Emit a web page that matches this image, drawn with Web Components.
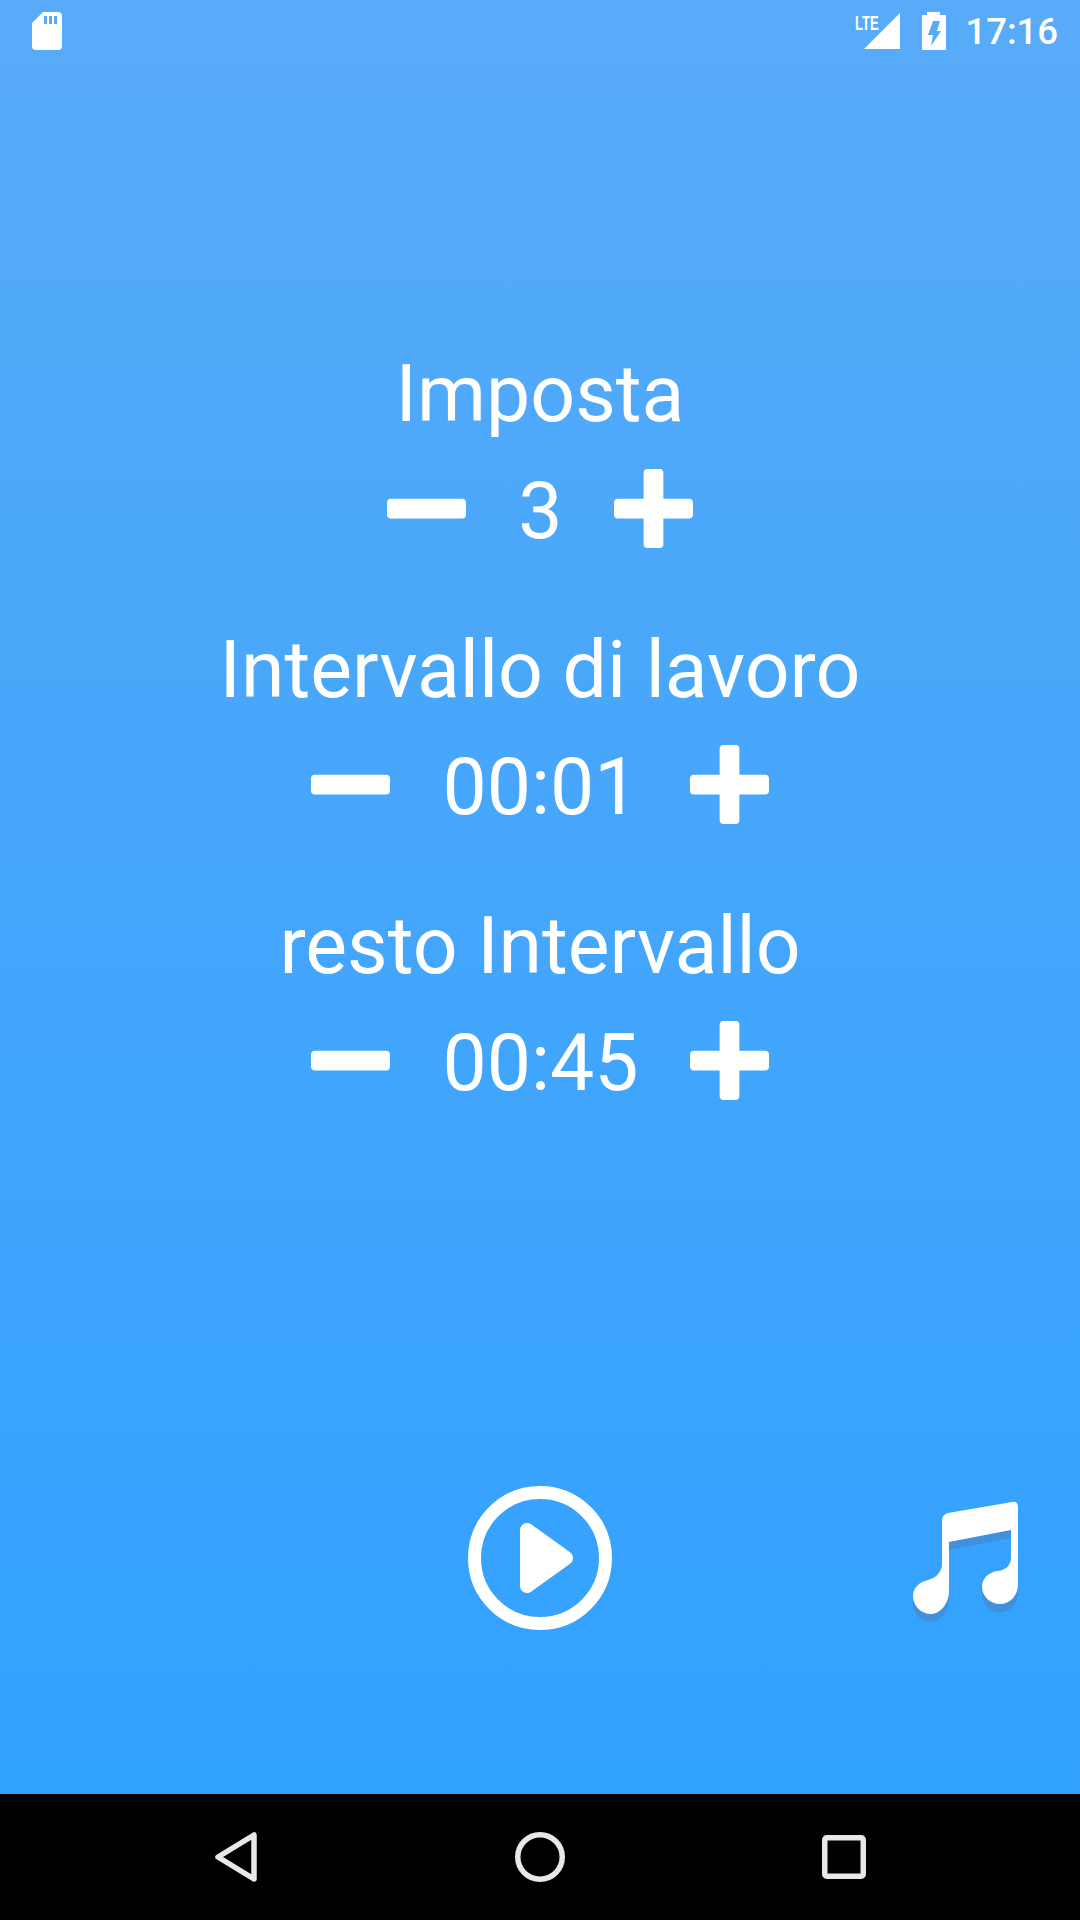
<!DOCTYPE html>
<html>
<head>
<meta charset="utf-8">
<style>
    html, body { margin: 0; padding: 0; }
    body { font-family: Roboto, "Liberation Sans", sans-serif; color: #fff; }
</style>
</head>
<body>
<timer-app>
    <status-bar slot="top" time="17:16"></status-bar>
    <set-stepper><span slot="label">Imposta</span>3</set-stepper>
    <set-stepper><span slot="label">Intervallo di lavoro</span>00:01</set-stepper>
    <set-stepper><span slot="label">resto Intervallo</span>00:45</set-stepper>
    <action-bar slot="actions"></action-bar>
    <nav-bar slot="bottom"></nav-bar>
</timer-app>

<script>
class timerApp extends HTMLElement {
    constructor() {
        super();
        this.attachShadow({ mode: 'open' });
        this.shadowRoot.innerHTML = `
            <slot name="top"></slot>
            <main><slot></slot></main>
            <slot name="actions"></slot>
            <slot name="bottom"></slot>
            <style>
                :host {
                    display: flex;
                    flex-direction: column;
                    width: 1080px;
                    height: 1920px;
                    overflow: hidden;
                    background: linear-gradient(#58abf8, #31a1ff 1794px, #31a1ff);
                }
                main {
                    flex: 1;
                    display: flex;
                    flex-direction: column;
                    gap: 75px;
                    padding-top: 275px;
                }
            </style>
        `;
    }
}

class statusBar extends HTMLElement {
    constructor() {
        super();
        this.attachShadow({ mode: 'open' });
        this.shadowRoot.innerHTML = `
            <svg class="sd" width="30" height="38" viewBox="0 0 30 38">
                <path fill-rule="evenodd" fill="#fff" d="M11 0H26Q30 0 30 4V34Q30 38 26 38H4Q0 38 0 34V11ZM12 4V12H15V4ZM17 4V12H20V4ZM22 4V12H25V4Z"/>
            </svg>
            <span class="right">
                <span class="signal">
                    <span class="lte">LTE</span>
                    <svg width="36" height="36" viewBox="0 0 36 36"><path fill="#fff" d="M36 0V36H0Z"/></svg>
                </span>
                <svg class="battery" width="24" height="38" viewBox="0 0 24 38">
                    <path fill-rule="evenodd" fill="#fff" d="M5 0H18V3H24V38H0V3H5ZM11 9H18L15 19H19L9 34L11 23H6Z"/>
                </svg>
                <span class="time">${this.getAttribute('time')}</span>
            </span>
            <style>
                :host {
                    display: flex;
                    justify-content: space-between;
                    align-items: flex-start;
                    height: 72px;
                    padding: 12px 22px 0 32px;
                    box-sizing: border-box;
                }
                svg { display: block; }
                .right {
                    display: flex;
                    align-items: flex-start;
                }
                .signal {
                    position: relative;
                    display: block;
                    width: 45px;
                    height: 37px;
                    margin-right: 22px;
                }
                .signal svg {
                    position: absolute;
                    right: 0;
                    top: 1px;
                }
                .lte {
                    position: absolute;
                    left: 0;
                    top: 0;
                    font: 700 21px/21px "Liberation Sans", sans-serif;
                    transform: scaleX(.62);
                    transform-origin: left top;
                }
                .time {
                    font: 500 36.5px/36px Roboto, sans-serif;
                    margin-left: 19px;
                    margin-top: 2px;
                }
            </style>
        `;
    }
}

class setStepper extends HTMLElement {
    constructor() {
        super();
        this.attachShadow({ mode: 'open' });
        this.shadowRoot.innerHTML = `
            <div class="label"><slot name="label"></slot></div>
            <div class="controls">
                <svg width="79" height="79" viewBox="0 0 80 80"><rect x="0" y="30" width="80" height="20" rx="4" fill="#fff"/></svg>
                <span class="value"><slot></slot></span>
                <svg width="79" height="79" viewBox="0 0 80 80"><path fill="#fff" d="M34 0H46Q50 0 50 4V30H76Q80 30 80 34V46Q80 50 76 50H50V76Q50 80 46 80H34Q30 80 30 76V50H4Q0 50 0 46V34Q0 30 4 30H30V4Q30 0 34 0Z"/></svg>
            </div>
            <style>
                :host {
                    display: flex;
                    flex-direction: column;
                    align-items: center;
                    font-size: 78.75px;
                }
                .label {
                    line-height: 94px;
                    height: 94px;
                    margin-bottom: 28px;
                }
                .controls {
                    display: flex;
                    align-items: center;
                    gap: 51px;
                    height: 79px;
                }
                .value {
                    line-height: 79px;
                    padding: 5px 0 0 1px;
                }
                svg { display: block; }
            </style>
        `;
    }
}

class actionBar extends HTMLElement {
    constructor() {
        super();
        this.attachShadow({ mode: 'open' });
        const note = 'M52 40Q52 35 58 33L122 22Q128 21 128 27V104C128 116 120 124 110 124C100 124 92 116 92 107C92 98 99 92 108 91C115 90 121 86 121 78V50L59 62V111C59 124 50 134 41 134C31 134 23 126 23 116C23 107 30 102 38 100C46 98 52 92 52 84Z';
        this.shadowRoot.innerHTML = `
            <svg class="play" width="144" height="144" viewBox="0 0 144 144">
                <circle cx="72" cy="72" r="65.5" fill="none" stroke="#fff" stroke-width="13"/>
                <path d="M59 44V100L98 72Z" fill="#fff" stroke="#fff" stroke-width="14" stroke-linejoin="round"/>
            </svg>
            <svg class="music" width="150" height="150" viewBox="0 0 150 150">
                <path d="${note}" fill="#3f90dd" transform="translate(0 8)"/>
                <path d="${note}" fill="#fff"/>
            </svg>
            <style>
                :host {
                    display: block;
                    position: relative;
                    height: 308px;
                }
                .play {
                    display: block;
                    margin: 0 auto;
                }
                .music {
                    position: absolute;
                    left: 890px;
                    top: -6px;
                }
            </style>
        `;
    }
}

class navBar extends HTMLElement {
    constructor() {
        super();
        this.attachShadow({ mode: 'open' });
        this.shadowRoot.innerHTML = `
            <svg class="back" width="46" height="54" viewBox="0 0 46 54"><path d="M41 5V49L5 27Z" fill="none" stroke="#e8e8e8" stroke-width="5.5" stroke-linejoin="round"/></svg>
            <svg class="home" width="50" height="50" viewBox="0 0 50 50"><circle cx="25" cy="25" r="22.25" fill="none" stroke="#e8e8e8" stroke-width="5.5"/></svg>
            <svg width="44" height="44" viewBox="0 0 44 44"><rect x="2.75" y="2.75" width="38.5" height="38.5" rx="2" fill="none" stroke="#e8e8e8" stroke-width="5.5"/></svg>
            <style>
                :host {
                    display: grid;
                    grid-template-columns: 46px 50px 44px;
                    justify-content: space-between;
                    align-items: center;
                    height: 126px;
                    padding: 0 214px 0 214px;
                    box-sizing: border-box;
                    background: #000;
                }
                svg { display: block; }
                .back { overflow: visible; margin-left: -1px; }
                .home { margin-left: -1px; }
            </style>
        `;
    }
}

customElements.define('timer-app', timerApp);
customElements.define('status-bar', statusBar);
customElements.define('set-stepper', setStepper);
customElements.define('action-bar', actionBar);
customElements.define('nav-bar', navBar);
</script>
</body>
</html>
